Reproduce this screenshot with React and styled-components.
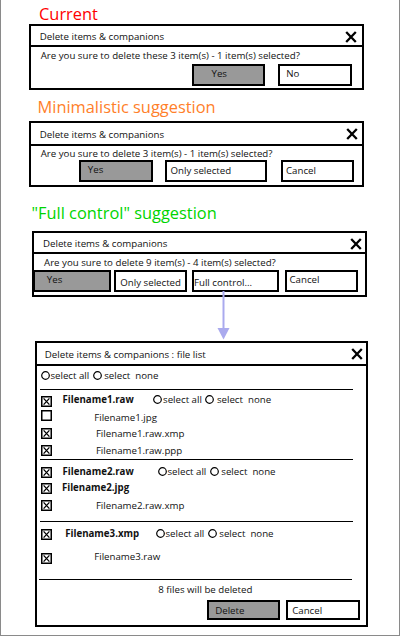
import React from "react";
import styled, { createGlobalStyle } from "styled-components";

const Global = createGlobalStyle`
  body {
    margin: 0;
    font-family: "Open Sans", "Noto Sans", sans-serif;
    color: #111;
    background: #fff;
  }
`;

const Close = () => (
  <svg width="12" height="12" viewBox="0 0 12 12">
    <path d="M1.2 1 L10.8 11 M10.8 1 L1.2 11" stroke="#000" strokeWidth="2.3" fill="none" />
  </svg>
);

const Check = ({ on }) => (
  <svg width="11" height="11" viewBox="0 0 11 11">
    <rect x="0.75" y="0.75" width="9.5" height="9.5" fill="#fff" stroke="#000" strokeWidth="1.5" />
    {on && <path d="M2.6 2.4 L8.4 8.6 M8.4 2.4 L2.6 8.6" stroke="#000" strokeWidth="1.3" />}
  </svg>
);

const Circle = () => (
  <svg width="9" height="9" viewBox="0 0 9 9">
    <circle cx="4.5" cy="4.5" r="3.8" fill="#fff" stroke="#000" strokeWidth="1.2" />
  </svg>
);

const Arrow = () => (
  <ArrowBox width="14" height="48.5" viewBox="0 0 14 48.5">
    <line x1="6.5" y1="0" x2="6.5" y2="38" stroke="#aaaaee" strokeWidth="2" />
    <polygon points="0.5,37 12.5,37 6.5,48.5" fill="#aaaaee" />
  </ArrowBox>
);

const Radios = ({ ml = 0 }) => (
  <RadioGroup $ml={ml}>
    <Circle />
    <Label $ml={0.7}>select all</Label>
    <RadioGap />
    <Circle />
    <Label $ml={0}> select  none</Label>
  </RadioGroup>
);

const FileRow = ({ on, name, bold, ml, w, radios, h, mt, up = 0 }) => (
  <Row $h={h} $mt={mt}>
    <Check on={on} />
    <Line $up={up}>
      <Name $bold={bold} $ml={ml} $w={w}>
        {name}
      </Name>
      {radios && <Radios />}
    </Line>
  </Row>
);

const App = () => {
  return (
    <Page>
      <Global />

      <Heading $color="#ff0000" $mt={4} $mb={0} $ml={38}>
        Current
      </Heading>
      <Dialog $w={335.5} $ml={27.5}>
        <TitleBar $h={15.4} $pt={3.3} $pl={9.25} $pr={5.3}>
          <Title>Delete items &amp; companions</Title>
          <Close />
        </TitleBar>
        <Body $pb={2.3}>
          <Message $mt={2} $pl={10.2}>
            Are you sure to delete these 3 item(s) - 1 item(s) selected?
          </Message>
          <ButtonRow $mt={2.6}>
            <Button $gray $ml={161.5} $w={73.3} $h={21.7} $pl={17.5} $shift={-1.6}>
              Yes
            </Button>
            <Button $ml={12.4} $w={74.6} $h={21.7} $pl={6.5} $shift={-1.6}>
              No
            </Button>
          </ButtonRow>
        </Body>
      </Dialog>

      <Heading $color="#ff7f2a" $mt={7} $mb={4} $ml={36.5}>
        Minimalistic suggestion
      </Heading>
      <Dialog $w={335.5} $ml={27.5}>
        <TitleBar $h={18.6} $pt={1.7} $pl={9.25} $pr={3.7}>
          <Title>Delete items &amp; companions</Title>
          <Close />
        </TitleBar>
        <Body $pb={3.5}>
          <Message $mt={1.2} $pl={10.2}>
            Are you sure to delete 3 item(s) - 1 item(s) selected?
          </Message>
          <ButtonRow $mt={0}>
            <Button $gray $ml={48.8} $w={74} $h={22} $pl={6.5} $shift={-1.2}>
              Yes
            </Button>
            <Button $ml={11.7} $w={101.7} $h={22} $pl={3.5}>
              Only selected
            </Button>
            <Button $ml={14.3} $w={73} $h={22} $pl={3}>
              Cancel
            </Button>
          </ButtonRow>
        </Body>
      </Dialog>

      <Heading $color="#00d400" $mt={16} $mb={8} $ml={30.5}>
        "Full control" suggestion
      </Heading>
      <Dialog $w={335.5} $ml={30.5}>
        <TitleBar $h={16.6} $pt={2.4} $pl={9.5} $pr={3.3}>
          <Title>Delete items &amp; companions</Title>
          <Close />
        </TitleBar>
        <Body $pb={3.3}>
          <Message $mt={2.2} $pl={10.5}>
            Are you sure to delete 9 item(s) - 4 item(s) selected?
          </Message>
          <ButtonRow $mt={0.8}>
            <Button $gray $ml={-0.2} $w={77.4} $h={21.7} $pl={11.5} $shift={-1.5}>
              Yes
            </Button>
            <Button $ml={3.6} $w={72.4} $h={21.7} $pl={4} $shift={1}>
              Only selected
            </Button>
            <Button $ml={5} $w={87.3} $h={21.7} $pl={0.3} $shift={1.5}>
              Full control...
            </Button>
            <Button $ml={6} $w={72.7} $h={21.7} $pl={2.5} $shift={-2}>
              Cancel
            </Button>
          </ButtonRow>
        </Body>
      </Dialog>

      <Arrow />

      <Dialog $w={333} $ml={33.8}>
        <TitleBar $h={19} $pt={1.5} $pl={8} $pr={3.1}>
          <Title>Delete items &amp; companions : file list</Title>
          <Close />
        </TitleBar>
        <Body $pb={5}>
          <RadioRow>
            <Radios />
          </RadioRow>
          <Rule $mt={5} $ml={3.2} $w={312.7} />

          <FileRow on bold radios name="Filename1.raw" ml={10.8} w={90.9} h={14} mt={4.35} up={2} />
          <FileRow name="Filename1.jpg" ml={42.5} h={14} mt={0} up={-1.5} />
          <FileRow on name="Filename1.raw.xmp" ml={44.2} h={18} mt={2} />
          <FileRow on name="Filename1.raw.ppp" ml={44.2} h={14.6} mt={0} />
          <Rule $mt={1.75} $ml={3.2} $w={312.7} />

          <FileRow on bold radios name="Filename2.raw" ml={10.8} w={95.3} h={14} mt={5.35} up={1} />
          <FileRow on bold name="Filename2.jpg" ml={10.2} h={16.6} mt={0} up={1} />
          <FileRow on name="Filename2.raw.xmp" ml={44.2} h={17.4} mt={0} />
          <Rule $mt={7.05} $ml={3.2} $w={312.7} />

          <FileRow on bold radios name="Filename3.xmp" ml={13.5} w={90.6} h={15} mt={4.65} up={1} />
          <FileRow on name="Filename3.raw" ml={42.5} h={14} mt={9.3} up={1.5} />
          <Rule $mt={14.05} $ml={2.5} $w={312.4} />

          <Summary>8 files will be deleted</Summary>
          <ButtonRow $mt={0.3}>
            <Button $gray $ml={169.9} $w={73.3} $h={20.7} $pl={6.5}>
              Delete
            </Button>
            <Button $ml={5.7} $w={74.3} $h={20.7} $pl={4.5}>
              Cancel
            </Button>
          </ButtonRow>
        </Body>
      </Dialog>
    </Page>
  );
};

export default App;

const Page = styled.div`
  width: 400px;
  height: 636px;
  box-sizing: border-box;
  border: 1px solid #8a8a8a;
  border-top: none;
  overflow: hidden;
`;

const Heading = styled.h2`
  margin: ${(p) => p.$mt}px 0 ${(p) => p.$mb}px ${(p) => p.$ml}px;
  height: 20px;
  line-height: 20px;
  font-size: 16.4px;
  font-weight: 400;
  color: ${(p) => p.$color};
  white-space: nowrap;
`;

const Dialog = styled.div`
  box-sizing: border-box;
  width: ${(p) => p.$w}px;
  margin-left: ${(p) => p.$ml}px;
  border: 2px solid #000;
  background: #fff;
`;

const TitleBar = styled.div`
  height: ${(p) => p.$h}px;
  padding: ${(p) => p.$pt}px ${(p) => p.$pr}px 0 ${(p) => p.$pl}px;
  border-bottom: 2px solid #000;
  display: flex;
  align-items: center;
  justify-content: space-between;
`;

const Title = styled.span`
  font-size: 9.7px;
  line-height: 13px;
  white-space: nowrap;
`;

const Body = styled.div`
  padding-bottom: ${(p) => p.$pb}px;
`;

const Message = styled.div`
  margin-top: ${(p) => p.$mt}px;
  padding-left: ${(p) => p.$pl}px;
  font-size: 9.7px;
  line-height: 13px;
  white-space: nowrap;
`;

const ButtonRow = styled.div`
  display: flex;
  margin-top: ${(p) => p.$mt}px;
`;

const Button = styled.div`
  box-sizing: border-box;
  flex: none;
  width: ${(p) => p.$w}px;
  height: ${(p) => p.$h}px;
  margin-left: ${(p) => p.$ml}px;
  border: 2px solid #000;
  background: ${(p) => (p.$gray ? "#999999" : "#ffffff")};
  display: flex;
  align-items: center;
  padding-left: ${(p) => p.$pl}px;
  padding-top: ${(p) => Math.max(0, (p.$shift || 0) * 2)}px;
  padding-bottom: ${(p) => Math.max(0, -(p.$shift || 0) * 2)}px;
  font-size: 9.7px;
  line-height: 13px;
  white-space: nowrap;
  overflow: hidden;
`;

const RadioRow = styled.div`
  display: flex;
  align-items: center;
  height: 18px;
  margin-top: 0.5px;
  padding-left: 3.9px;
`;

const RadioGroup = styled.div`
  display: flex;
  align-items: center;
  margin-left: ${(p) => p.$ml}px;
  svg {
    flex: none;
  }
`;

const RadioGap = styled.span`
  width: 3.5px;
`;

const Label = styled.span`
  margin-left: ${(p) => p.$ml}px;
  font-size: 9.7px;
  line-height: 13px;
  white-space: pre;
`;

const Rule = styled.div`
  height: 1.3px;
  background: #000;
  margin: ${(p) => p.$mt}px 0 0 ${(p) => p.$ml}px;
  width: ${(p) => p.$w}px;
`;

const Row = styled.div`
  display: flex;
  align-items: center;
  height: ${(p) => p.$h}px;
  margin-top: ${(p) => p.$mt}px;
  padding-left: 3.9px;
  svg {
    flex: none;
  }
`;

const Line = styled.div`
  display: flex;
  align-items: center;
  padding-bottom: ${(p) => Math.max(0, p.$up * 2)}px;
  padding-top: ${(p) => Math.max(0, -p.$up * 2)}px;
`;

const Name = styled.span`
  flex: none;
  margin-left: ${(p) => p.$ml}px;
  width: ${(p) => (p.$w ? `${p.$w}px` : "auto")};
  font-size: 9.7px;
  line-height: 13px;
  font-weight: ${(p) => (p.$bold ? 700 : 400)};
  white-space: nowrap;
`;

const Summary = styled.div`
  margin-top: 1.05px;
  height: 18px;
  line-height: 18px;
  padding-left: 8px;
  text-align: center;
  font-size: 9.7px;
`;

const ArrowBox = styled.svg`
  display: block;
  margin: -6px 0 1.5px 215.5px;
  position: relative;
`;
